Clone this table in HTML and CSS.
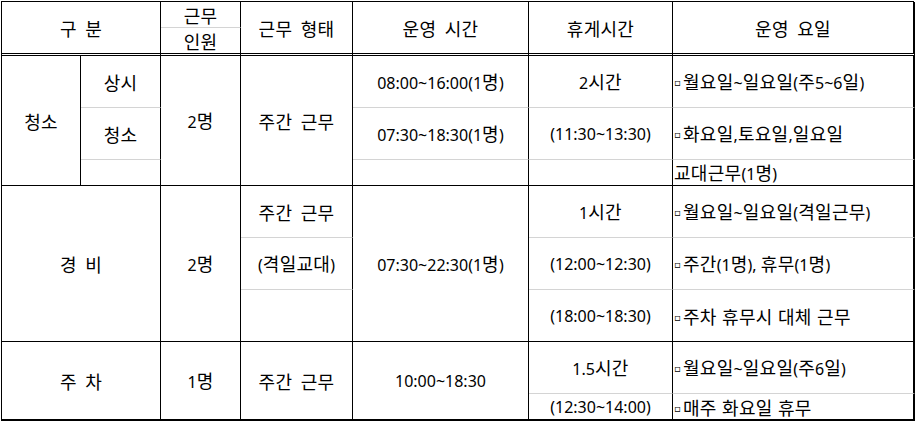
FILE: index.html
```html
<!DOCTYPE html>
<html lang="ko">
<head>
<meta charset="utf-8">
<title>근무 현황</title>
<link rel="stylesheet" href="styles.css">
</head>
<body>
<div class="sheet">
  <div class="grid">
    <!-- header -->
    <div class="cell c2 r2 hd"><span class="t wide">구 분</span></div>
    <div class="cell gray"><span class="t">근무</span></div>
    <div class="cell r2 hd"><span class="t wide">근무 형태</span></div>
    <div class="cell r2 hd"><span class="t wide">운영 시간</span></div>
    <div class="cell r2 hd"><span class="t">휴게시간</span></div>
    <div class="cell r2 hd last"><span class="t wide">운영 요일</span></div>
    <div class="cell hd"><span class="t">인원</span></div>

    <!-- 청소 -->
    <div class="cell r3"><span class="t">청소</span></div>
    <div class="cell gray"><span class="t">상시</span></div>
    <div class="cell r3"><span class="t"><span class="en">2</span>명</span></div>
    <div class="cell r3"><span class="t wide">주간 근무</span></div>
    <div class="cell gray"><span class="t"><span class="en">08:00~16:00(1</span>명<span class="en">)</span></span></div>
    <div class="cell gray"><span class="t"><span class="en">2</span>시간</span></div>
    <div class="cell gray last left"><span class="t"><span class="mk">▫</span>월요일<span class="en">~</span>일요일<span class="en">(</span>주<span class="en">5~6</span>일<span class="en">)</span></span></div>

    <div class="cell gray"><span class="t">청소</span></div>
    <div class="cell gray"><span class="t"><span class="en">07:30~18:30(1</span>명<span class="en">)</span></span></div>
    <div class="cell gray"><span class="t en">(11:30~13:30)</span></div>
    <div class="cell gray last left"><span class="t"><span class="mk">▫</span>화요일<span class="en">,</span>토요일<span class="en">,</span>일요일</span></div>

    <div class="cell"></div>
    <div class="cell"></div>
    <div class="cell"></div>
    <div class="cell last left"><span class="t">교대근무<span class="en">(1</span>명<span class="en">)</span></span></div>

    <!-- 경비 -->
    <div class="cell c2 r3"><span class="t wide">경 비</span></div>
    <div class="cell r3"><span class="t"><span class="en">2</span>명</span></div>
    <div class="cell gray"><span class="t wide">주간 근무</span></div>
    <div class="cell r3"><span class="t"><span class="en">07:30~22:30(1</span>명<span class="en">)</span></span></div>
    <div class="cell gray"><span class="t"><span class="en">1</span>시간</span></div>
    <div class="cell gray last left"><span class="t"><span class="mk">▫</span>월요일<span class="en">~</span>일요일<span class="en">(</span>격일근무<span class="en">)</span></span></div>

    <div class="cell gray"><span class="t"><span class="en">(</span>격일교대<span class="en">)</span></span></div>
    <div class="cell gray"><span class="t en">(12:00~12:30)</span></div>
    <div class="cell gray last left"><span class="t"><span class="mk">▫</span>주간<span class="en">(1</span>명<span class="en">), </span>휴무<span class="en">(1</span>명<span class="en">)</span></span></div>

    <div class="cell"></div>
    <div class="cell"><span class="t en">(18:00~18:30)</span></div>
    <div class="cell last left"><span class="t"><span class="mk">▫</span>주차 휴무시 대체 근무</span></div>

    <!-- 주차 -->
    <div class="cell c2 r2 bot"><span class="t wide">주 차</span></div>
    <div class="cell r2 bot"><span class="t"><span class="en">1</span>명</span></div>
    <div class="cell r2 bot"><span class="t wide">주간 근무</span></div>
    <div class="cell r2 bot"><span class="t en">10:00~18:30</span></div>
    <div class="cell gray"><span class="t"><span class="en">1.5</span>시간</span></div>
    <div class="cell gray last left"><span class="t"><span class="mk">▫</span>월요일<span class="en">~</span>일요일<span class="en">(</span>주<span class="en">6</span>일<span class="en">)</span></span></div>

    <div class="cell bot"><span class="t en">(12:30~14:00)</span></div>
    <div class="cell bot last left"><span class="t"><span class="mk">▫</span>매주 화요일 휴무</span></div>
  </div>
</div>
</body>
</html>
```

FILE: styles.css
```css
html, body {
  margin: 0;
  padding: 0;
  background: #ffffff;
}

.sheet {
  padding: 1px 0 0 1px;
}

.grid {
  display: grid;
  grid-template-columns: 79px 80px 80px 112px 176px 144px 242px;
  grid-template-rows: 26px 28px 52px 52px 26px 52px 52px 52px 52px 27px;
  border-top: 1px solid #000;
  border-left: 1px solid #000;
  width: 913px;
  box-sizing: border-box;
  font-family: "Noto Sans CJK KR", "Noto Sans", sans-serif;
  font-size: 18px;
  color: #000;
}

.cell {
  box-sizing: border-box;
  border-right: 1px solid #000;
  border-bottom: 1px solid #000;
  display: flex;
  align-items: center;
  justify-content: center;
  white-space: nowrap;
}

.t {
  display: block;
  line-height: 20px;
  letter-spacing: 0.3px;
}

.wide {
  word-spacing: 3px;
}

.en {
  font-family: "Noto Sans", sans-serif;
  font-size: 16px;
  letter-spacing: 0;
}

.mk {
  display: inline-block;
  width: 9px;
  font-family: "DejaVu Sans", sans-serif;
  font-size: 10px;
  line-height: 10px;
  letter-spacing: 0;
  vertical-align: 3px;
}

.c2 { grid-column: span 2; }
.r2 { grid-row: span 2; }
.r3 { grid-row: span 3; }

.gray { border-bottom-color: #d4d4d4; }

.hd { border-bottom: 3px double #000; }

.bot { border-bottom: 2px solid #000; }

.last { border-right-width: 2px; }

.left {
  justify-content: flex-start;
  padding-left: 1px;
}
```
